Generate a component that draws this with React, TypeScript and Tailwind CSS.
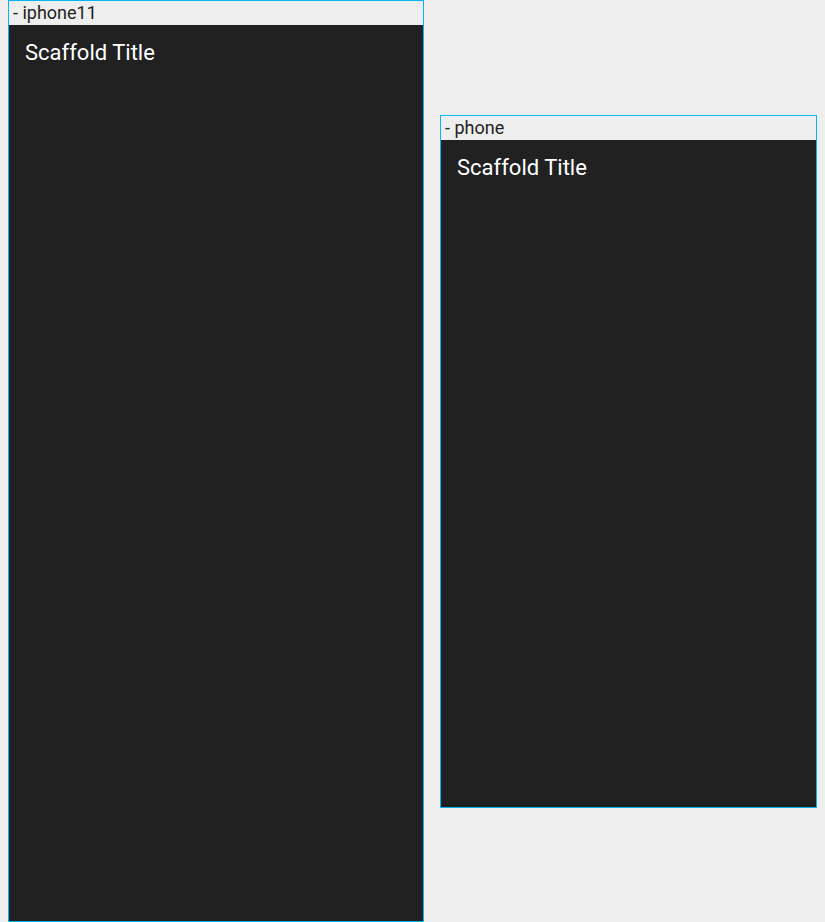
import React from "react";

const devices = [
  { name: "iphone11", width: "w-[414px]", height: "h-[896px]" },
  { name: "phone", width: "w-[375px]", height: "h-[667px]" },
];

export default function App() {
  return (
    <div
      className="min-h-screen bg-[#eeeeee] flex items-center gap-4 pl-2 overflow-hidden"
      style={{ fontFamily: "Roboto, 'Noto Sans', sans-serif" }}
    >
      {devices.map((d) => (
        <div key={d.name} className="border border-[#03b5f5] shrink-0">
          <div className="h-6 px-1 text-[18px] leading-6 text-[#222222] bg-[#eeeeee]">
            - {d.name}
          </div>
          <div className={`${d.width} ${d.height} bg-[#212121] px-4 pt-4`}>
            <div className="text-white text-[22px] leading-6">Scaffold Title</div>
          </div>
        </div>
      ))}
    </div>
  );
}
